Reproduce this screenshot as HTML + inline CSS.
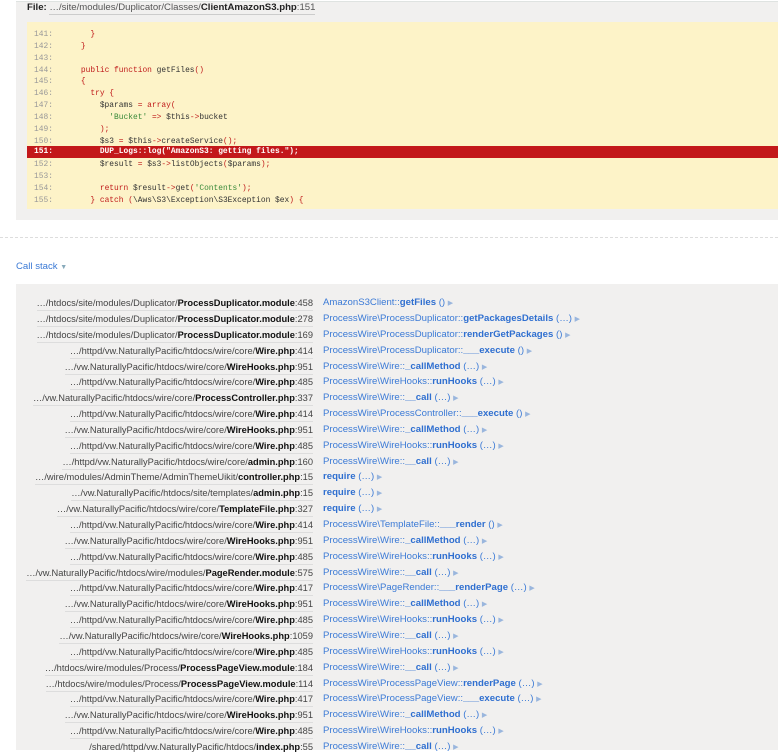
<!DOCTYPE html>
<html><head><meta charset="utf-8"><style>
*{margin:0;padding:0;box-sizing:border-box}
body{width:778px;height:750px;overflow:hidden;background:#fff;font-family:"Liberation Sans",sans-serif;position:relative}
#top{position:absolute;left:16px;top:1px;width:762px;height:219px;background:#f1f0ef;border-top:1px solid #dfe3e1}
#file{position:absolute;left:27px;top:2px;font-size:9.6px;color:#555;line-height:12px}
#file b{color:#222}
#file .u{border-bottom:1px solid #ccc;padding-bottom:1px}
#code{position:absolute;left:27px;top:22px;width:751px;height:187px;background:#fdf3c8}
.cl{position:absolute;left:0;width:751px;height:12px;font-family:"Liberation Mono",monospace;font-size:7.9px;line-height:12px;white-space:pre;color:#333}
.cl .n{position:absolute;left:7px;color:#999}
.cl .c{position:absolute;left:16px}
.k{color:#c01b1b}.s{color:#3a8a3a}
.cl.hl{background:#c3181a;color:#fff;font-weight:bold}
.cl.hl .n,.cl.hl span{color:#fff}
#dash{position:absolute;left:0;top:237px;width:778px;border-top:1px dashed #ddd}
#cs{position:absolute;left:16px;top:261px;font-size:9.6px;color:#3b7ad6}
#cs i{font-style:normal;font-size:7px;color:#8ab}
#stack{position:absolute;left:16px;top:284px;width:762px;height:466px;background:#f1f0ef}
#rows{position:absolute;left:0;top:2px;width:762px}
.r{position:absolute;height:16px;font-size:9.3px;line-height:16px;white-space:nowrap}
.l{right:465px;color:#444;border-bottom:1px solid #ddd;line-height:14px;height:15px}
.l b{color:#111}
.f{left:307px;color:#3b7ad6;font-size:9.6px}
.f b{color:#2f6fd0}
.f i{font-style:normal;font-size:7px;color:#9ab6dd}
</style></head><body>
<div id="top">
</div>
<div id="file"><b>File:</b> <span class="u">…/site/modules/Duplicator/Classes/<b>ClientAmazonS3.php</b>:151</span></div>
<div id="code">
<div class="cl" style="top:7px"><span class="n">141:</span><span class="c">          <span class="k">}</span></span></div>
<div class="cl" style="top:19px"><span class="n">142:</span><span class="c">        <span class="k">}</span></span></div>
<div class="cl" style="top:31px"><span class="n">143:</span></div>
<div class="cl" style="top:43px"><span class="n">144:</span><span class="c">        <span class="k">public function</span> getFiles<span class="k">()</span></span></div>
<div class="cl" style="top:54px"><span class="n">145:</span><span class="c">        <span class="k">{</span></span></div>
<div class="cl" style="top:66px"><span class="n">146:</span><span class="c">          <span class="k">try {</span></span></div>
<div class="cl" style="top:78px"><span class="n">147:</span><span class="c">            $params <span class="k">= array(</span></span></div>
<div class="cl" style="top:90px"><span class="n">148:</span><span class="c">              <span class="s">'Bucket'</span> <span class="k">=&gt;</span> $this<span class="k">-&gt;</span>bucket</span></div>
<div class="cl" style="top:102px"><span class="n">149:</span><span class="c">            <span class="k">);</span></span></div>
<div class="cl" style="top:114px"><span class="n">150:</span><span class="c">            $s3 <span class="k">=</span> $this<span class="k">-&gt;</span>createService<span class="k">();</span></span></div>
<div class="cl hl" style="top:124px"><span class="n">151:</span><span class="c">            DUP_Logs::log("AmazonS3: getting files.");</span></div>
<div class="cl" style="top:137px"><span class="n">152:</span><span class="c">            $result <span class="k">=</span> $s3<span class="k">-&gt;</span>listObjects<span class="k">(</span>$params<span class="k">);</span></span></div>
<div class="cl" style="top:149px"><span class="n">153:</span></div>
<div class="cl" style="top:161px"><span class="n">154:</span><span class="c">            <span class="k">return</span> $result<span class="k">-&gt;</span>get<span class="k">(</span><span class="s">'Contents'</span><span class="k">);</span></span></div>
<div class="cl" style="top:173px"><span class="n">155:</span><span class="c">          <span class="k">} catch (</span>\Aws\S3\Exception\S3Exception $ex<span class="k">) {</span></span></div>
</div>
<div id="dash"></div>
<div id="cs">Call stack <i>▼</i></div>
<div id="stack"><div id="rows">
<div class="r l" style="top:10px">…/htdocs/site/modules/Duplicator/<b>ProcessDuplicator.module</b>:458</div><div class="r f" style="top:9px">AmazonS3Client::<b>getFiles</b> () <i>▶</i></div>
<div class="r l" style="top:26px">…/htdocs/site/modules/Duplicator/<b>ProcessDuplicator.module</b>:278</div><div class="r f" style="top:25px">ProcessWire\ProcessDuplicator::<b>getPackagesDetails</b> (…) <i>▶</i></div>
<div class="r l" style="top:42px">…/htdocs/site/modules/Duplicator/<b>ProcessDuplicator.module</b>:169</div><div class="r f" style="top:41px">ProcessWire\ProcessDuplicator::<b>renderGetPackages</b> () <i>▶</i></div>
<div class="r l" style="top:58px">…/httpd/vw.NaturallyPacific/htdocs/wire/core/<b>Wire.php</b>:414</div><div class="r f" style="top:57px">ProcessWire\ProcessDuplicator::<b>___execute</b> () <i>▶</i></div>
<div class="r l" style="top:74px">…/vw.NaturallyPacific/htdocs/wire/core/<b>WireHooks.php</b>:951</div><div class="r f" style="top:73px">ProcessWire\Wire::<b>_callMethod</b> (…) <i>▶</i></div>
<div class="r l" style="top:89px">…/httpd/vw.NaturallyPacific/htdocs/wire/core/<b>Wire.php</b>:485</div><div class="r f" style="top:88px">ProcessWire\WireHooks::<b>runHooks</b> (…) <i>▶</i></div>
<div class="r l" style="top:105px">…/vw.NaturallyPacific/htdocs/wire/core/<b>ProcessController.php</b>:337</div><div class="r f" style="top:104px">ProcessWire\Wire::<b>__call</b> (…) <i>▶</i></div>
<div class="r l" style="top:121px">…/httpd/vw.NaturallyPacific/htdocs/wire/core/<b>Wire.php</b>:414</div><div class="r f" style="top:120px">ProcessWire\ProcessController::<b>___execute</b> () <i>▶</i></div>
<div class="r l" style="top:137px">…/vw.NaturallyPacific/htdocs/wire/core/<b>WireHooks.php</b>:951</div><div class="r f" style="top:136px">ProcessWire\Wire::<b>_callMethod</b> (…) <i>▶</i></div>
<div class="r l" style="top:153px">…/httpd/vw.NaturallyPacific/htdocs/wire/core/<b>Wire.php</b>:485</div><div class="r f" style="top:152px">ProcessWire\WireHooks::<b>runHooks</b> (…) <i>▶</i></div>
<div class="r l" style="top:169px">…/httpd/vw.NaturallyPacific/htdocs/wire/core/<b>admin.php</b>:160</div><div class="r f" style="top:168px">ProcessWire\Wire::<b>__call</b> (…) <i>▶</i></div>
<div class="r l" style="top:184px">…/wire/modules/AdminTheme/AdminThemeUikit/<b>controller.php</b>:15</div><div class="r f" style="top:183px"><b>require</b> (…) <i>▶</i></div>
<div class="r l" style="top:200px">…/vw.NaturallyPacific/htdocs/site/templates/<b>admin.php</b>:15</div><div class="r f" style="top:199px"><b>require</b> (…) <i>▶</i></div>
<div class="r l" style="top:216px">…/vw.NaturallyPacific/htdocs/wire/core/<b>TemplateFile.php</b>:327</div><div class="r f" style="top:215px"><b>require</b> (…) <i>▶</i></div>
<div class="r l" style="top:232px">…/httpd/vw.NaturallyPacific/htdocs/wire/core/<b>Wire.php</b>:414</div><div class="r f" style="top:231px">ProcessWire\TemplateFile::<b>___render</b> () <i>▶</i></div>
<div class="r l" style="top:248px">…/vw.NaturallyPacific/htdocs/wire/core/<b>WireHooks.php</b>:951</div><div class="r f" style="top:247px">ProcessWire\Wire::<b>_callMethod</b> (…) <i>▶</i></div>
<div class="r l" style="top:264px">…/httpd/vw.NaturallyPacific/htdocs/wire/core/<b>Wire.php</b>:485</div><div class="r f" style="top:263px">ProcessWire\WireHooks::<b>runHooks</b> (…) <i>▶</i></div>
<div class="r l" style="top:280px">…/vw.NaturallyPacific/htdocs/wire/modules/<b>PageRender.module</b>:575</div><div class="r f" style="top:279px">ProcessWire\Wire::<b>__call</b> (…) <i>▶</i></div>
<div class="r l" style="top:295px">…/httpd/vw.NaturallyPacific/htdocs/wire/core/<b>Wire.php</b>:417</div><div class="r f" style="top:294px">ProcessWire\PageRender::<b>___renderPage</b> (…) <i>▶</i></div>
<div class="r l" style="top:311px">…/vw.NaturallyPacific/htdocs/wire/core/<b>WireHooks.php</b>:951</div><div class="r f" style="top:310px">ProcessWire\Wire::<b>_callMethod</b> (…) <i>▶</i></div>
<div class="r l" style="top:327px">…/httpd/vw.NaturallyPacific/htdocs/wire/core/<b>Wire.php</b>:485</div><div class="r f" style="top:326px">ProcessWire\WireHooks::<b>runHooks</b> (…) <i>▶</i></div>
<div class="r l" style="top:343px">…/vw.NaturallyPacific/htdocs/wire/core/<b>WireHooks.php</b>:1059</div><div class="r f" style="top:342px">ProcessWire\Wire::<b>__call</b> (…) <i>▶</i></div>
<div class="r l" style="top:359px">…/httpd/vw.NaturallyPacific/htdocs/wire/core/<b>Wire.php</b>:485</div><div class="r f" style="top:358px">ProcessWire\WireHooks::<b>runHooks</b> (…) <i>▶</i></div>
<div class="r l" style="top:375px">…/htdocs/wire/modules/Process/<b>ProcessPageView.module</b>:184</div><div class="r f" style="top:374px">ProcessWire\Wire::<b>__call</b> (…) <i>▶</i></div>
<div class="r l" style="top:391px">…/htdocs/wire/modules/Process/<b>ProcessPageView.module</b>:114</div><div class="r f" style="top:390px">ProcessWire\ProcessPageView::<b>renderPage</b> (…) <i>▶</i></div>
<div class="r l" style="top:406px">…/httpd/vw.NaturallyPacific/htdocs/wire/core/<b>Wire.php</b>:417</div><div class="r f" style="top:405px">ProcessWire\ProcessPageView::<b>___execute</b> (…) <i>▶</i></div>
<div class="r l" style="top:422px">…/vw.NaturallyPacific/htdocs/wire/core/<b>WireHooks.php</b>:951</div><div class="r f" style="top:421px">ProcessWire\Wire::<b>_callMethod</b> (…) <i>▶</i></div>
<div class="r l" style="top:438px">…/httpd/vw.NaturallyPacific/htdocs/wire/core/<b>Wire.php</b>:485</div><div class="r f" style="top:437px">ProcessWire\WireHooks::<b>runHooks</b> (…) <i>▶</i></div>
<div class="r l" style="top:454px;border-bottom:none">/shared/httpd/vw.NaturallyPacific/htdocs/<b>index.php</b>:55</div><div class="r f" style="top:453px">ProcessWire\Wire::<b>__call</b> (…) <i>▶</i></div>
</div></div>
</body></html>
